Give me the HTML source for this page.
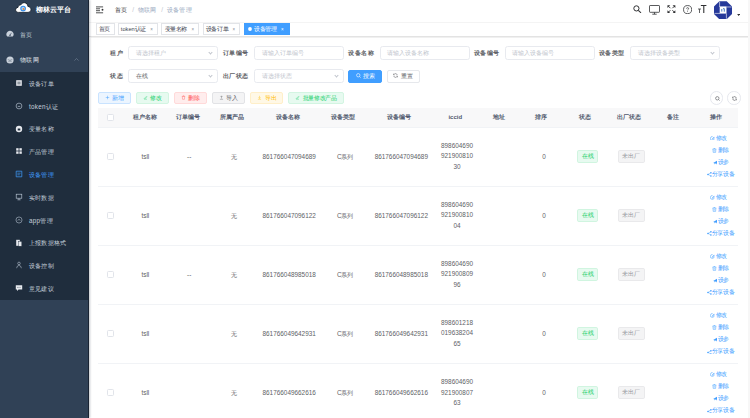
<!DOCTYPE html>
<html><head><meta charset="utf-8">
<style>
*{box-sizing:border-box;margin:0;padding:0}
html,body{width:750px;height:418px;overflow:hidden;background:#fff;font-family:"Liberation Sans",sans-serif;color:#606266}
.abs{position:absolute}
#side{position:absolute;left:0;top:0;width:88.8px;height:418px;background:#304156;border-right:1.2px solid #1a2433;box-shadow:1px 0 2px rgba(0,21,41,.25);z-index:5}
#side .sub{position:absolute;left:0;top:71.7px;width:88px;height:228px;background:#1f2d3d}
.mi{position:absolute;left:0;width:88px;height:14px;line-height:14px;font-size:6.3px;letter-spacing:0.3px;color:#c7d1dc;white-space:nowrap}
.mi svg{position:absolute}
.mi .tx{position:absolute;top:0}
#nav{position:absolute;left:88px;top:0;width:662px;height:22.6px;background:#fff;border-bottom:1.6px solid #f4f4f4}
#tags{position:absolute;left:88px;top:22.6px;width:662px;height:14.6px;background:#fff;border-bottom:1px solid #e3e3e3;box-shadow:0 0.8px 1px rgba(0,0,0,.06)}
.tag{position:absolute;top:0.2px;height:12px;line-height:11px;border:0.5px solid #e2e4e8;font-size:5.7px;letter-spacing:-0.42px;color:#3d4350;padding:0 3.5px 0 2.3px;white-space:nowrap;background:#fff}
.tag.act{background:#409eff;border-color:#409eff;color:#fff}
.tag.act .x{color:#fff}
.tag .x{display:inline-block;margin-left:4.4px;font-size:4.5px;color:#8a8f99}
.lbl{position:absolute;font-size:6.45px;letter-spacing:0.45px;font-weight:bold;color:#606266;line-height:14px;white-space:nowrap;text-align:right}
.inp{position:absolute;height:14.4px;border:0.6px solid #e8eaef;border-radius:2.6px;font-size:5.6px;line-height:13.2px;padding-left:6.5px;color:#c0c4cc;white-space:nowrap;overflow:hidden}
.inp .arr{position:absolute;right:5px;top:4.2px;width:3px;height:3px;border-right:0.6px solid #c0c4cc;border-bottom:0.6px solid #c0c4cc;transform:rotate(45deg)}
.btn{position:absolute;height:12.8px;border:0.6px solid;border-radius:2px;font-size:5.7px;line-height:11.2px;text-align:center;white-space:nowrap}
.cell{position:absolute;text-align:center;font-size:6.4px;white-space:nowrap;color:#606266}
.hd{font-size:6px}
.hd{font-weight:bold;color:#515a6e;line-height:18.4px;top:108.4px;height:18.4px}
.rowline{position:absolute;left:97.9px;width:640.5px;height:1px;background:#f1f3f6}
.cb{position:absolute;width:7px;height:7px;border:0.6px solid #e1e4ea;border-radius:1.4px;background:#fff}
.stag{position:absolute;height:12.8px;line-height:11.8px;font-size:5.9px;border:0.5px solid;border-radius:1.8px;text-align:center}
.op{position:absolute;font-size:5.8px;letter-spacing:-0.3px;color:#409eff;white-space:nowrap;line-height:7px}
</style></head><body>
<div id="side"><div class="sub"></div>
<svg class="abs" style="left:15.2px;top:2.2px" width="16.6" height="11.2" viewBox="0 0 16.6 11.2">
<path d="M3.4 10.4 C1.6 10.4 0.6 9.3 0.6 7.9 C0.6 6.5 1.6 5.5 3.0 5.4 C3.2 3.8 4.3 2.8 5.8 2.8 C6.6 1.4 8.0 0.6 9.6 0.7 C11.6 0.9 12.8 2.5 12.9 4.4 C14.8 4.6 16.0 5.9 16.0 7.5 C16.0 9.1 14.8 10.4 13.0 10.4 Z" fill="#fff" stroke="#17212e" stroke-width="0.9"/>
<circle cx="8.1" cy="6.6" r="2.3" fill="#a9d0f7" stroke="#3a8ee6" stroke-width="1.1"/><circle cx="8.5" cy="7" r="0.95" fill="#f5892a"/></svg>
<div class="abs" style="left:36px;top:5px;font-size:7px;font-weight:bold;color:#fff;line-height:9px;white-space:nowrap">柳林云平台</div>
<div class="mi" style="top:27.8px;letter-spacing:0.5px"><svg style="left:5.9px;top:2.2px" width="8" height="8" viewBox="0 0 10 10"><path d="M1.6 8.2 A4.4 4.4 0 1 1 8.4 8.2 Z" fill="#c9d1db"/><circle cx="5" cy="6.6" r="0.9" fill="#304156"/><path d="M5 6.6 L6.8 3.6" stroke="#304156" stroke-width="0.7"/></svg><span class="tx" style="left:19.8px">首页</span></div>
<div class="mi" style="top:53px;color:#e4e9ef;letter-spacing:0.55px"><svg style="left:5.9px;top:2.7px" width="8" height="8" viewBox="0 0 10 10"><circle cx="5" cy="5" r="4.5" fill="#c9d1db"/><path d="M2.2 4.4 Q5 6.6 7.8 4.4M3 7 Q5 5.6 7 7" stroke="#304156" stroke-width="0.5" fill="none"/></svg><span class="tx" style="left:19.8px">物联网</span><svg style="left:74.4px;top:5px" width="5" height="3" viewBox="0 0 5 3"><path d="M0.4 2.6 L2.5 0.5 L4.6 2.6" fill="none" stroke="#8391a5" stroke-width="0.5"/></svg></div>
<div class="mi" style="top:76.70px"><svg style="left:14.6px;top:2.4px" width="8" height="8" viewBox="0 0 10 10"><rect x="1.5" y="1.5" width="7" height="7" fill="#e6e9ee"/><path d="M3 4h4M3 6h4" stroke="#1f2d3d" stroke-width="0.8"/></svg><span class="tx" style="left:28.9px">设备订单</span></div>
<div class="mi" style="top:99.50px"><svg style="left:14.6px;top:2.4px" width="8" height="8" viewBox="0 0 10 10"><circle cx="5" cy="5" r="3.6" fill="none" stroke="#bfcbd9" stroke-width="0.8"/><path d="M3.5 5.5h3" stroke="#bfcbd9" stroke-width="0.8"/></svg><span class="tx" style="left:28.9px">token认证</span></div>
<div class="mi" style="top:122.30px"><svg style="left:14.6px;top:2.4px" width="8" height="8" viewBox="0 0 10 10"><circle cx="5" cy="5" r="4" fill="#e6e9ee"/><rect x="3.4" y="4.4" width="3.2" height="2.4" fill="#1f2d3d"/></svg><span class="tx" style="left:28.9px">变量名称</span></div>
<div class="mi" style="top:145.10px"><svg style="left:14.6px;top:2.4px" width="8" height="8" viewBox="0 0 10 10"><rect x="1.5" y="1.5" width="3" height="3" fill="#e6e9ee"/><rect x="5.5" y="1.5" width="3" height="3" fill="#e6e9ee"/><rect x="1.5" y="5.5" width="3" height="3" fill="#e6e9ee"/><rect x="5.5" y="5.5" width="3" height="3" fill="#e6e9ee"/></svg><span class="tx" style="left:28.9px">产品管理</span></div>
<div class="mi" style="top:167.90px;color:#409eff"><svg style="left:14.6px;top:2.4px" width="8" height="8" viewBox="0 0 10 10"><path d="M1.5 1.5h7v7h-7z" fill="none" stroke="#409eff" stroke-width="0.9"/><path d="M3 4h4M3 6h3" stroke="#409eff" stroke-width="0.8"/></svg><span class="tx" style="left:28.9px">设备管理</span></div>
<div class="mi" style="top:190.70px"><svg style="left:14.6px;top:2.4px" width="8" height="8" viewBox="0 0 10 10"><rect x="1.5" y="1.5" width="7" height="5" fill="none" stroke="#bfcbd9" stroke-width="0.8"/><path d="M5 6.5v2M3 8.5h4" stroke="#bfcbd9" stroke-width="0.8"/></svg><span class="tx" style="left:28.9px">实时数据</span></div>
<div class="mi" style="top:213.50px"><svg style="left:14.6px;top:2.4px" width="8" height="8" viewBox="0 0 10 10"><circle cx="5" cy="5" r="3.8" fill="none" stroke="#bfcbd9" stroke-width="0.7"/><path d="M3.5 5.8 L5 4 L6.5 5.8" stroke="#bfcbd9" stroke-width="0.7" fill="none"/></svg><span class="tx" style="left:28.9px">app管理</span></div>
<div class="mi" style="top:236.30px"><svg style="left:14.6px;top:2.4px" width="8" height="8" viewBox="0 0 10 10"><rect x="1.5" y="1" width="4.5" height="7.5" fill="#e6e9ee"/><rect x="4.5" y="3" width="4" height="6" fill="#e6e9ee" stroke="#1f2d3d" stroke-width="0.5"/></svg><span class="tx" style="left:28.9px">上报数据格式</span></div>
<div class="mi" style="top:259.10px"><svg style="left:14.6px;top:2.4px" width="8" height="8" viewBox="0 0 10 10"><circle cx="5" cy="3" r="1.6" fill="none" stroke="#bfcbd9" stroke-width="0.7"/><path d="M2 9 Q2.5 5.5 5 5.5 Q7.5 5.5 8 9" fill="none" stroke="#bfcbd9" stroke-width="0.7"/></svg><span class="tx" style="left:28.9px">设备控制</span></div>
<div class="mi" style="top:281.90px"><svg style="left:14.6px;top:2.4px" width="8" height="8" viewBox="0 0 10 10"><path d="M1 1.5h8v5.5h-4.5l-2 1.8v-1.8h-1.5z" fill="#e6e9ee"/><path d="M3 4.3h4" stroke="#1f2d3d" stroke-width="0.8" stroke-dasharray="0.8 0.7"/></svg><span class="tx" style="left:28.9px">意见建议</span></div>
</div>
<div id="nav">
<svg class="abs" style="left:8.2px;top:5.5px" width="8" height="8" viewBox="0 0 8 8"><path d="M0 0.9h7.1M0 2.8h4M0 4.7h4M0 6.8h7.1" stroke="#303133" stroke-width="0.85"/><circle cx="6.5" cy="3.8" r="0.95" fill="#303133"/></svg>
<div class="abs" style="left:27.2px;top:4.8px;font-size:6.45px;letter-spacing:0.3px;line-height:9px;white-space:nowrap"><span style="color:#303133">首页</span><span style="color:#c0c4cc;margin:0 3.6px 0 4.4px">/</span><span style="color:#97a8be">物联网</span><span style="color:#c0c4cc;margin:0 3.6px 0 4.4px">/</span><span style="color:#97a8be">设备管理</span></div>
<svg class="abs" style="left:545px;top:5.4px" width="9" height="8" viewBox="0 0 9 8"><circle cx="3.4" cy="3.4" r="2.6" fill="none" stroke="#303133" stroke-width="1"/><path d="M5.3 5.3 L8 7.8" stroke="#303133" stroke-width="1.1"/></svg>
<svg class="abs" style="left:561px;top:5.4px" width="11" height="10" viewBox="0 0 11 10"><rect x="0.5" y="0.5" width="10" height="6.8" rx="0.6" fill="none" stroke="#303133" stroke-width="0.8"/><path d="M5.5 7.3v1.8M3.3 9.2h4.4" stroke="#303133" stroke-width="0.8"/></svg>
<svg class="abs" style="left:579.2px;top:5px" width="8.8" height="8.4" viewBox="0 0 10 10"><path d="M0.3 0.3h3.3L0.3 3.6zM9.7 0.3v3.3L6.4 0.3zM9.7 9.7H6.4L9.7 6.4zM0.3 9.7V6.4L3.6 9.7z" fill="#303133"/><path d="M1.5 1.5L3.8 3.8M8.5 1.5L6.2 3.8M8.5 8.5L6.2 6.2M1.5 8.5L3.8 6.2" stroke="#303133" stroke-width="1.1"/></svg>
<svg class="abs" style="left:594.7px;top:4.7px" width="9.2" height="9.2" viewBox="0 0 10 10"><circle cx="5" cy="5" r="4.4" fill="none" stroke="#303133" stroke-width="0.85"/><path d="M3.9 4 Q3.9 2.9 5 2.9 Q6.1 2.9 6.1 3.9 Q6.1 4.5 5.4 4.9 Q5 5.2 5 5.9" fill="none" stroke="#303133" stroke-width="0.75"/><circle cx="5" cy="7.1" r="0.45" fill="#303133"/></svg>
<svg class="abs" style="left:610.2px;top:5px" width="8.4" height="8.4" viewBox="0 0 10 10"><path d="M3.4 0.6H10M6.9 0.6V10" fill="none" stroke="#303133" stroke-width="1.3"/><path d="M0 4.8H3.6M1.8 4.8V9.8" fill="none" stroke="#303133" stroke-width="0.9"/></svg>
<svg class="abs" style="left:625.8px;top:0.6px" width="18" height="18.4" viewBox="0 0 18 18">
<path d="M5.3 0 H12.7 L18 5.3 V12.7 L12.7 18 H5.3 L0 12.7 V5.3 Z" fill="#26399a"/>
<path d="M5.7 5.2h6.8v7.2H5.7z" fill="#fff"/>
<path d="M5.6 0.4V5.8M12.4 5.8H17.6M12.4 12.4V17.6M0.4 12.2H6" stroke="#fff" stroke-width="0.6"/>
<path d="M7.8 7.8v2.6M9 7.5 L10.3 7.5 V10.5" stroke="#3a6fc0" stroke-width="0.9" fill="none"/>
</svg>
<svg class="abs" style="left:649px;top:13.6px" width="3.2" height="2" viewBox="0 0 3 2"><path d="M0 0h3L1.5 2z" fill="#303133"/></svg>
</div>
<div id="tags">
<div class="tag" style="left:7.6px;width:19px">首页</div>
<div class="tag" style="left:29.5px;width:40.6px"><span style="letter-spacing:0">token</span>认证<span class="x">×</span></div>
<div class="tag" style="left:73.4px;width:37.8px">变量名称<span class="x">×</span></div>
<div class="tag" style="left:114.6px;width:37.8px">设备订单<span class="x">×</span></div>
<div class="tag act" style="left:156.3px;width:45.4px"><svg width="4" height="4" viewBox="0 0 4 4" style="vertical-align:-0.2px;margin-right:2.6px"><circle cx="2" cy="2" r="1.9" fill="#fff"/></svg>设备管理<span class="x">×</span></div>
</div>
<div class="lbl" style="left:83.10000000000001px;width:40px;top:45.5px">租户</div>
<div class="inp" style="left:128.4px;top:45.5px;width:90.1px">请选择租户<span class="arr"></span></div>
<div class="lbl" style="left:208.79999999999998px;width:40px;top:45.5px">订单编号</div>
<div class="inp" style="left:254.1px;top:45.5px;width:90px">请输入订单编号</div>
<div class="lbl" style="left:334.3px;width:40px;top:45.5px">设备名称</div>
<div class="inp" style="left:379.6px;top:45.5px;width:90px">请输入设备名称</div>
<div class="lbl" style="left:459.59999999999997px;width:40px;top:45.5px">设备编号</div>
<div class="inp" style="left:504.9px;top:45.5px;width:90px">请输入设备编号</div>
<div class="lbl" style="left:584.8000000000001px;width:40px;top:45.5px">设备类型</div>
<div class="inp" style="left:630.1px;top:45.5px;width:90px">请选择设备类型<span class="arr"></span></div>
<div class="lbl" style="left:83.10000000000001px;width:40px;top:68.7px">状态</div>
<div class="inp" style="left:128.4px;top:68.7px;width:90.1px;color:#606266">在线<span class="arr"></span></div>
<div class="lbl" style="left:208.79999999999998px;width:40px;top:68.7px">出厂状态</div>
<div class="inp" style="left:254.1px;top:68.7px;width:90px">请选择状态<span class="arr"></span></div>
<div class="btn" style="left:348.3px;top:69.8px;width:33.9px;background:#409eff;border-color:#409eff;color:#fff"><svg width="5" height="5" viewBox="0 0 10 10" style="vertical-align:-0.5px;margin-right:2.4px"><circle cx="4.5" cy="4.5" r="3.4" fill="none" stroke="#fff" stroke-width="1.2"/><path d="M7 7L9.3 9.3" stroke="#fff" stroke-width="1.2"/></svg>搜索</div>
<div class="btn" style="left:386.6px;top:69.8px;width:33.2px;background:#fff;border-color:#e6e8ec;color:#606266"><svg width="5" height="5" viewBox="0 0 10 10" style="vertical-align:-0.5px;margin-right:2.4px"><path d="M8.6 4A3.8 3.8 0 0 0 1.6 3.2M1.4 6A3.8 3.8 0 0 0 8.4 6.8" fill="none" stroke="#606266" stroke-width="1.1"/><path d="M0.8 1.2v2.6h2.6M9.2 8.8V6.2H6.6" fill="none" stroke="#606266" stroke-width="1"/></svg>重置</div>
<div class="btn" style="left:97.7px;top:91.7px;width:33.7px;background:#ecf5ff;border-color:#c9e3ff;color:#409eff"><svg width="5" height="5" viewBox="0 0 10 10" style="vertical-align:-0.5px;margin-right:2.6px"><path d="M5 1.5v7M1.5 5h7" stroke="#409eff" stroke-width="0.9"/></svg>新增</div>
<div class="btn" style="left:135.8px;top:91.7px;width:33.7px;background:#e7faf0;border-color:#d3f5e2;color:#13ce66"><svg width="5" height="5" viewBox="0 0 10 10" style="vertical-align:-0.5px;margin-right:2.6px"><path d="M2 8.5h6M2.5 7l4.5-4.5 1 1L3.5 8z" stroke="#13ce66" stroke-width="0.7" fill="none"/></svg>修改</div>
<div class="btn" style="left:173.9px;top:91.7px;width:33.3px;background:#ffeded;border-color:#ffdada;color:#ff4949"><svg width="5" height="5" viewBox="0 0 10 10" style="vertical-align:-0.5px;margin-right:2.6px"><path d="M1.8 2.8h6.4M4 2.8V1.6h2v1.2M2.6 2.8l.5 5.8h3.8l.5-5.8" stroke="#ff4949" stroke-width="0.7" fill="none"/></svg>删除</div>
<div class="btn" style="left:212px;top:91.7px;width:33.3px;background:#f4f4f5;border-color:#e2e3e6;color:#606266"><svg width="5" height="5" viewBox="0 0 10 10" style="vertical-align:-0.5px;margin-right:2.6px"><path d="M1.8 8.6h6.4M5 7V1.8M3 3.8L5 1.8 7 3.8" stroke="#606266" stroke-width="0.8" fill="none"/></svg>导入</div>
<div class="btn" style="left:250.1px;top:91.7px;width:33.3px;background:#fff8e6;border-color:#ffefc9;color:#ffba00"><svg width="5" height="5" viewBox="0 0 10 10" style="vertical-align:-0.5px;margin-right:2.6px"><path d="M1.8 8.6h6.4M5 1.6V6.8M3 4.8L5 6.8 7 4.8" stroke="#ffba00" stroke-width="0.8" fill="none"/></svg>导出</div>
<div class="btn" style="left:288.2px;top:91.7px;width:55.8px;background:#e7faf0;border-color:#d3f5e2;color:#13ce66;letter-spacing:-0.35px;text-indent:-0.5px"><svg width="5" height="5" viewBox="0 0 10 10" style="vertical-align:-0.5px;margin-right:2.6px"><path d="M2 8.5h6M2.5 7l4.5-4.5 1 1L3.5 8z" stroke="#13ce66" stroke-width="0.7" fill="none"/></svg>批量修改产品</div>
<div class="abs" style="left:710px;top:91.3px;width:13.3px;height:13.3px;border:0.6px solid #e6e8ee;border-radius:50%"><svg style="position:absolute;left:3.8px;top:3.8px" width="5" height="5" viewBox="0 0 10 10"><circle cx="4.6" cy="4.6" r="3.4" fill="none" stroke="#606266" stroke-width="1.3"/><path d="M7 7L9.2 9.2" stroke="#606266" stroke-width="1.3"/></svg></div>
<div class="abs" style="left:727.3px;top:91.3px;width:13.3px;height:13.3px;border:0.6px solid #e6e8ee;border-radius:50%"><svg style="position:absolute;left:3.8px;top:3.8px" width="5" height="5" viewBox="0 0 10 10"><path d="M8.6 4A3.8 3.8 0 0 0 1.6 3.2M1.4 6A3.8 3.8 0 0 0 8.4 6.8" fill="none" stroke="#606266" stroke-width="1.3"/><path d="M0.6 1.2v3h3M9.4 8.8v-3h-3" fill="none" stroke="#606266" stroke-width="1.1"/></svg></div>
<div class="abs" style="left:748px;top:0;width:2px;height:418px;background:#f7f7f7;z-index:9"></div>
<div class="abs" style="left:97.9px;top:108.4px;width:640.1px;height:18.4px;background:#f8f8f9"></div>
<div class="cb" style="left:106.6px;top:114.1px"></div>
<div class="cell hd" style="left:104.50px;width:80px">租户名称</div>
<div class="cell hd" style="left:148.00px;width:80px">订单编号</div>
<div class="cell hd" style="left:191.70px;width:80px">所属产品</div>
<div class="cell hd" style="left:247.70px;width:80px">设备名称</div>
<div class="cell hd" style="left:303.00px;width:80px">设备类型</div>
<div class="cell hd" style="left:358.80px;width:80px">设备编号</div>
<div class="cell hd" style="left:415.30px;width:80px">iccid</div>
<div class="cell hd" style="left:458.50px;width:80px">地址</div>
<div class="cell hd" style="left:501.30px;width:80px">排序</div>
<div class="cell hd" style="left:545.30px;width:80px">状态</div>
<div class="cell hd" style="left:588.80px;width:80px">出厂状态</div>
<div class="cell hd" style="left:633.30px;width:80px">备注</div>
<div class="cell hd" style="left:676.00px;width:80px">操作</div>
<div class="rowline" style="top:126.5px"></div>
<div class="cb" style="left:106.8px;top:153.03px"></div>
<div class="cell" style="left:105.35px;width:80px;top:152.13px;line-height:10px">tsll</div>
<div class="cell" style="left:149.20px;width:80px;top:152.13px;line-height:10px">--</div>
<div class="cell" style="left:193.50px;width:80px;top:152.13px;line-height:10px">无</div>
<div class="cell" style="left:249.20px;width:80px;top:152.13px;line-height:10px">861766047094689</div>
<div class="cell" style="left:305.20px;width:80px;top:152.13px;line-height:10px">C系列</div>
<div class="cell" style="left:361.30px;width:80px;top:152.13px;line-height:10px">861766047094689</div>
<div class="cell" style="left:417.00px;width:80px;top:140.94px;line-height:10.3px;white-space:normal">898604690<br>921900810<br>30</div>
<div class="cell" style="left:504.00px;width:80px;top:152.13px;line-height:10px">0</div>
<div class="stag" style="left:576.9px;top:150.13px;width:21.4px;background:#e7faf0;border-color:#d0f5e0;color:#13ce66">在线</div>
<div class="stag" style="left:617.8px;top:150.13px;width:27px;background:#f4f4f5;border-color:#e9e9eb;color:#909399">未出厂</div>
<svg class="abs" style="left:709.9px;top:135.70px" width="4.8" height="4.8" viewBox="0 0 10 10"><path d="M5.5 1.2A4 4 0 1 0 8.8 5" fill="none" stroke="#409eff" stroke-width="1.1"/><path d="M4.2 6.2L8.6 1.6l1 1L5.2 7.2 3.9 7.5z" fill="#409eff"/></svg>
<div class="op" style="left:715.5px;top:134.60px">修改</div>
<svg class="abs" style="left:712.1px;top:147.90px" width="4.8" height="4.8" viewBox="0 0 10 10"><path d="M1 2.4h8M3.8 2.4V1h2.4v1.4M1.9 2.4l.6 6.8h5l.6-6.8" stroke="#409eff" stroke-width="1" fill="none"/><path d="M4.2 4.4v3M5.8 4.4v3" stroke="#409eff" stroke-width="0.8"/></svg>
<div class="op" style="left:717.5px;top:146.80px">删除</div>
<svg class="abs" style="left:712.5px;top:160.10px" width="4.8" height="4.8" viewBox="0 0 10 10"><path d="M0.3 6.2 L9.7 0.6 L7.2 9.6 L5.2 6.8 L3 9.4 L3.2 6.6 Z" fill="#409eff"/></svg>
<div class="op" style="left:717.5px;top:159.00px">设参</div>
<svg class="abs" style="left:707.2px;top:172.30px" width="4.8" height="4.8" viewBox="0 0 10 10"><circle cx="2" cy="5" r="1.6" fill="#409eff"/><circle cx="8.2" cy="1.8" r="1.6" fill="#409eff"/><circle cx="8.2" cy="8.2" r="1.6" fill="#409eff"/><path d="M2 5L8 1.8M2 5l6 3.2" stroke="#409eff" stroke-width="0.9"/></svg>
<div class="op" style="left:711.5px;top:171.20px">分享设备</div>
<div class="rowline" style="top:185.87px"></div>
<div class="cb" style="left:106.8px;top:212.10px"></div>
<div class="cell" style="left:105.35px;width:80px;top:211.20px;line-height:10px">tsll</div>
<div class="cell" style="left:193.50px;width:80px;top:211.20px;line-height:10px">无</div>
<div class="cell" style="left:249.20px;width:80px;top:211.20px;line-height:10px">861766047096122</div>
<div class="cell" style="left:305.20px;width:80px;top:211.20px;line-height:10px">C系列</div>
<div class="cell" style="left:361.30px;width:80px;top:211.20px;line-height:10px">861766047096122</div>
<div class="cell" style="left:417.00px;width:80px;top:200.00px;line-height:10.3px;white-space:normal">898604690<br>921900810<br>04</div>
<div class="cell" style="left:504.00px;width:80px;top:211.20px;line-height:10px">0</div>
<div class="stag" style="left:576.9px;top:209.20px;width:21.4px;background:#e7faf0;border-color:#d0f5e0;color:#13ce66">在线</div>
<div class="stag" style="left:617.8px;top:209.20px;width:27px;background:#f4f4f5;border-color:#e9e9eb;color:#909399">未出厂</div>
<svg class="abs" style="left:709.9px;top:194.77px" width="4.8" height="4.8" viewBox="0 0 10 10"><path d="M5.5 1.2A4 4 0 1 0 8.8 5" fill="none" stroke="#409eff" stroke-width="1.1"/><path d="M4.2 6.2L8.6 1.6l1 1L5.2 7.2 3.9 7.5z" fill="#409eff"/></svg>
<div class="op" style="left:715.5px;top:193.67px">修改</div>
<svg class="abs" style="left:712.1px;top:206.97px" width="4.8" height="4.8" viewBox="0 0 10 10"><path d="M1 2.4h8M3.8 2.4V1h2.4v1.4M1.9 2.4l.6 6.8h5l.6-6.8" stroke="#409eff" stroke-width="1" fill="none"/><path d="M4.2 4.4v3M5.8 4.4v3" stroke="#409eff" stroke-width="0.8"/></svg>
<div class="op" style="left:717.5px;top:205.87px">删除</div>
<svg class="abs" style="left:712.5px;top:219.17px" width="4.8" height="4.8" viewBox="0 0 10 10"><path d="M0.3 6.2 L9.7 0.6 L7.2 9.6 L5.2 6.8 L3 9.4 L3.2 6.6 Z" fill="#409eff"/></svg>
<div class="op" style="left:717.5px;top:218.07px">设参</div>
<svg class="abs" style="left:707.2px;top:231.37px" width="4.8" height="4.8" viewBox="0 0 10 10"><circle cx="2" cy="5" r="1.6" fill="#409eff"/><circle cx="8.2" cy="1.8" r="1.6" fill="#409eff"/><circle cx="8.2" cy="8.2" r="1.6" fill="#409eff"/><path d="M2 5L8 1.8M2 5l6 3.2" stroke="#409eff" stroke-width="0.9"/></svg>
<div class="op" style="left:711.5px;top:230.27px">分享设备</div>
<div class="rowline" style="top:244.94px"></div>
<div class="cb" style="left:106.8px;top:271.18px"></div>
<div class="cell" style="left:105.35px;width:80px;top:270.28px;line-height:10px">tsll</div>
<div class="cell" style="left:149.20px;width:80px;top:270.28px;line-height:10px">--</div>
<div class="cell" style="left:193.50px;width:80px;top:270.28px;line-height:10px">无</div>
<div class="cell" style="left:249.20px;width:80px;top:270.28px;line-height:10px">861766048985018</div>
<div class="cell" style="left:305.20px;width:80px;top:270.28px;line-height:10px">C系列</div>
<div class="cell" style="left:361.30px;width:80px;top:270.28px;line-height:10px">861766048985018</div>
<div class="cell" style="left:417.00px;width:80px;top:259.08px;line-height:10.3px;white-space:normal">898604690<br>921900809<br>96</div>
<div class="cell" style="left:504.00px;width:80px;top:270.28px;line-height:10px">0</div>
<div class="stag" style="left:576.9px;top:268.28px;width:21.4px;background:#e7faf0;border-color:#d0f5e0;color:#13ce66">在线</div>
<div class="stag" style="left:617.8px;top:268.28px;width:27px;background:#f4f4f5;border-color:#e9e9eb;color:#909399">未出厂</div>
<svg class="abs" style="left:709.9px;top:253.84px" width="4.8" height="4.8" viewBox="0 0 10 10"><path d="M5.5 1.2A4 4 0 1 0 8.8 5" fill="none" stroke="#409eff" stroke-width="1.1"/><path d="M4.2 6.2L8.6 1.6l1 1L5.2 7.2 3.9 7.5z" fill="#409eff"/></svg>
<div class="op" style="left:715.5px;top:252.74px">修改</div>
<svg class="abs" style="left:712.1px;top:266.04px" width="4.8" height="4.8" viewBox="0 0 10 10"><path d="M1 2.4h8M3.8 2.4V1h2.4v1.4M1.9 2.4l.6 6.8h5l.6-6.8" stroke="#409eff" stroke-width="1" fill="none"/><path d="M4.2 4.4v3M5.8 4.4v3" stroke="#409eff" stroke-width="0.8"/></svg>
<div class="op" style="left:717.5px;top:264.94px">删除</div>
<svg class="abs" style="left:712.5px;top:278.24px" width="4.8" height="4.8" viewBox="0 0 10 10"><path d="M0.3 6.2 L9.7 0.6 L7.2 9.6 L5.2 6.8 L3 9.4 L3.2 6.6 Z" fill="#409eff"/></svg>
<div class="op" style="left:717.5px;top:277.14px">设参</div>
<svg class="abs" style="left:707.2px;top:290.44px" width="4.8" height="4.8" viewBox="0 0 10 10"><circle cx="2" cy="5" r="1.6" fill="#409eff"/><circle cx="8.2" cy="1.8" r="1.6" fill="#409eff"/><circle cx="8.2" cy="8.2" r="1.6" fill="#409eff"/><path d="M2 5L8 1.8M2 5l6 3.2" stroke="#409eff" stroke-width="0.9"/></svg>
<div class="op" style="left:711.5px;top:289.34px">分享设备</div>
<div class="rowline" style="top:304.01px"></div>
<div class="cb" style="left:106.8px;top:330.25px"></div>
<div class="cell" style="left:105.35px;width:80px;top:329.35px;line-height:10px">tsll</div>
<div class="cell" style="left:193.50px;width:80px;top:329.35px;line-height:10px">无</div>
<div class="cell" style="left:249.20px;width:80px;top:329.35px;line-height:10px">861766049642931</div>
<div class="cell" style="left:305.20px;width:80px;top:329.35px;line-height:10px">C系列</div>
<div class="cell" style="left:361.30px;width:80px;top:329.35px;line-height:10px">861766049642931</div>
<div class="cell" style="left:417.00px;width:80px;top:318.15px;line-height:10.3px;white-space:normal">898601218<br>019638204<br>65</div>
<div class="cell" style="left:504.00px;width:80px;top:329.35px;line-height:10px">0</div>
<div class="stag" style="left:576.9px;top:327.35px;width:21.4px;background:#e7faf0;border-color:#d0f5e0;color:#13ce66">在线</div>
<div class="stag" style="left:617.8px;top:327.35px;width:27px;background:#f4f4f5;border-color:#e9e9eb;color:#909399">未出厂</div>
<svg class="abs" style="left:709.9px;top:312.91px" width="4.8" height="4.8" viewBox="0 0 10 10"><path d="M5.5 1.2A4 4 0 1 0 8.8 5" fill="none" stroke="#409eff" stroke-width="1.1"/><path d="M4.2 6.2L8.6 1.6l1 1L5.2 7.2 3.9 7.5z" fill="#409eff"/></svg>
<div class="op" style="left:715.5px;top:311.81px">修改</div>
<svg class="abs" style="left:712.1px;top:325.11px" width="4.8" height="4.8" viewBox="0 0 10 10"><path d="M1 2.4h8M3.8 2.4V1h2.4v1.4M1.9 2.4l.6 6.8h5l.6-6.8" stroke="#409eff" stroke-width="1" fill="none"/><path d="M4.2 4.4v3M5.8 4.4v3" stroke="#409eff" stroke-width="0.8"/></svg>
<div class="op" style="left:717.5px;top:324.01px">删除</div>
<svg class="abs" style="left:712.5px;top:337.31px" width="4.8" height="4.8" viewBox="0 0 10 10"><path d="M0.3 6.2 L9.7 0.6 L7.2 9.6 L5.2 6.8 L3 9.4 L3.2 6.6 Z" fill="#409eff"/></svg>
<div class="op" style="left:717.5px;top:336.21px">设参</div>
<svg class="abs" style="left:707.2px;top:349.51px" width="4.8" height="4.8" viewBox="0 0 10 10"><circle cx="2" cy="5" r="1.6" fill="#409eff"/><circle cx="8.2" cy="1.8" r="1.6" fill="#409eff"/><circle cx="8.2" cy="8.2" r="1.6" fill="#409eff"/><path d="M2 5L8 1.8M2 5l6 3.2" stroke="#409eff" stroke-width="0.9"/></svg>
<div class="op" style="left:711.5px;top:348.41px">分享设备</div>
<div class="rowline" style="top:363.08px"></div>
<div class="cb" style="left:106.8px;top:389.32px"></div>
<div class="cell" style="left:105.35px;width:80px;top:388.42px;line-height:10px">tsll</div>
<div class="cell" style="left:193.50px;width:80px;top:388.42px;line-height:10px">无</div>
<div class="cell" style="left:249.20px;width:80px;top:388.42px;line-height:10px">861766049662616</div>
<div class="cell" style="left:305.20px;width:80px;top:388.42px;line-height:10px">C系列</div>
<div class="cell" style="left:361.30px;width:80px;top:388.42px;line-height:10px">861766049662616</div>
<div class="cell" style="left:417.00px;width:80px;top:377.22px;line-height:10.3px;white-space:normal">898604690<br>921900807<br>63</div>
<div class="cell" style="left:504.00px;width:80px;top:388.42px;line-height:10px">0</div>
<div class="stag" style="left:576.9px;top:386.42px;width:21.4px;background:#e7faf0;border-color:#d0f5e0;color:#13ce66">在线</div>
<div class="stag" style="left:617.8px;top:386.42px;width:27px;background:#f4f4f5;border-color:#e9e9eb;color:#909399">未出厂</div>
<svg class="abs" style="left:709.9px;top:371.98px" width="4.8" height="4.8" viewBox="0 0 10 10"><path d="M5.5 1.2A4 4 0 1 0 8.8 5" fill="none" stroke="#409eff" stroke-width="1.1"/><path d="M4.2 6.2L8.6 1.6l1 1L5.2 7.2 3.9 7.5z" fill="#409eff"/></svg>
<div class="op" style="left:715.5px;top:370.88px">修改</div>
<svg class="abs" style="left:712.1px;top:384.18px" width="4.8" height="4.8" viewBox="0 0 10 10"><path d="M1 2.4h8M3.8 2.4V1h2.4v1.4M1.9 2.4l.6 6.8h5l.6-6.8" stroke="#409eff" stroke-width="1" fill="none"/><path d="M4.2 4.4v3M5.8 4.4v3" stroke="#409eff" stroke-width="0.8"/></svg>
<div class="op" style="left:717.5px;top:383.08px">删除</div>
<svg class="abs" style="left:712.5px;top:396.38px" width="4.8" height="4.8" viewBox="0 0 10 10"><path d="M0.3 6.2 L9.7 0.6 L7.2 9.6 L5.2 6.8 L3 9.4 L3.2 6.6 Z" fill="#409eff"/></svg>
<div class="op" style="left:717.5px;top:395.28px">设参</div>
<svg class="abs" style="left:707.2px;top:408.58px" width="4.8" height="4.8" viewBox="0 0 10 10"><circle cx="2" cy="5" r="1.6" fill="#409eff"/><circle cx="8.2" cy="1.8" r="1.6" fill="#409eff"/><circle cx="8.2" cy="8.2" r="1.6" fill="#409eff"/><path d="M2 5L8 1.8M2 5l6 3.2" stroke="#409eff" stroke-width="0.9"/></svg>
<div class="op" style="left:711.5px;top:407.48px">分享设备</div>
<div class="rowline" style="top:422.15px"></div>
</body></html>
